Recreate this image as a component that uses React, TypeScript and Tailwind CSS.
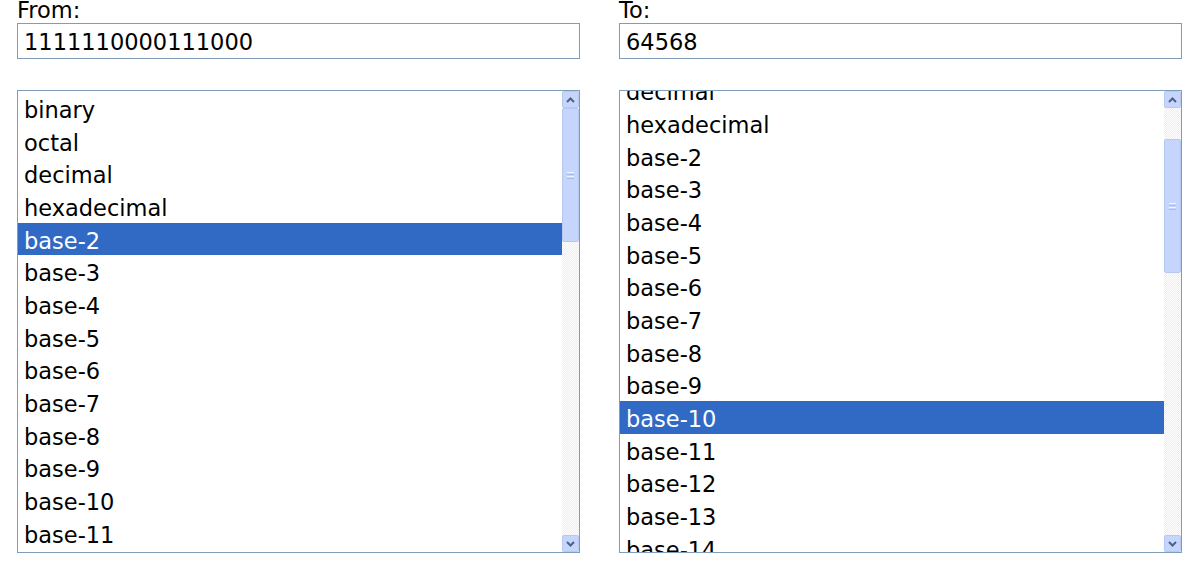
import React from "react";

const options = [
  "binary",
  "octal",
  "decimal",
  "hexadecimal",
  ...Array.from({ length: 35 }, (_, i) => `base-${i + 2}`),
];

function Chevron({ up }: { up: boolean }) {
  return (
    <svg width="9" height="6" viewBox="0 0 9 6" className="block">
      <path
        d={up ? "M1 5 L4.5 1.5 L8 5" : "M1 1 L4.5 4.5 L8 1"}
        fill="none"
        stroke="#4d6185"
        strokeWidth={2}
      />
    </svg>
  );
}

function ScrollButton({ up }: { up: boolean }) {
  return (
    <div className="h-[17px] w-[17px] shrink-0 rounded-[2px] border border-[#b7c9f3] bg-[#c6d5fb] flex items-center justify-center">
      <Chevron up={up} />
    </div>
  );
}

function Scrollbar({ thumbTop }: { thumbTop: number }) {
  return (
    <div className="w-[17px] shrink-0 flex flex-col bg-[repeating-conic-gradient(#ffffff_0_25%,#eeede6_0_50%)] bg-[length:2px_2px]">
      <ScrollButton up />
      <div className="relative flex-1">
        <div
          className="absolute left-0 h-[134px] w-[17px] rounded-[2px] border border-[#b6c8f2] bg-[#c6d5fc] flex flex-col items-center justify-center gap-[1px]"
          style={{ top: thumbTop }}
        >
          <div className="h-[1px] w-[7px] bg-[#eef3ff]" />
          <div className="h-[1px] w-[7px] bg-[#a9bdeb]" />
          <div className="h-[1px] w-[7px] bg-[#eef3ff]" />
          <div className="h-[1px] w-[7px] bg-[#a9bdeb]" />
        </div>
      </div>
      <ScrollButton up={false} />
    </div>
  );
}

function ListBox({
  selected,
  offset,
  thumbTop,
}: {
  selected: string;
  offset: number;
  thumbTop: number;
}) {
  return (
    <div className="mt-[31px] h-[463px] border border-[#7f9db9] bg-white flex overflow-hidden">
      <div className="flex-1 overflow-hidden pt-[1px]">
        <div style={{ marginTop: -offset }}>
          {options.map((o) => (
            <div
              key={o}
              className={
                "h-[32.67px] pl-[6px] pt-[4px] leading-[28.67px] whitespace-nowrap " +
                (o === selected ? "bg-[#316ac5] text-white" : "text-black")
              }
            >
              {o}
            </div>
          ))}
        </div>
      </div>
      <Scrollbar thumbTop={thumbTop} />
    </div>
  );
}

function Column({
  label,
  value,
  selected,
  offset,
  thumbTop,
}: {
  label: string;
  value: string;
  selected: string;
  offset: number;
  thumbTop: number;
}) {
  return (
    <div className="w-[563px] shrink-0">
      <div className="h-[23px] leading-[23px] -mt-[1px] mb-[1px] text-black">{label}</div>
      <div className="h-[36px] border border-[#7f9db9] bg-white pl-[6px] pt-[3px] leading-[31px] text-black">
        {value}
      </div>
      <ListBox selected={selected} offset={offset} thumbTop={thumbTop} />
    </div>
  );
}

export default function App() {
  return (
    <div className="w-[1194px] h-[562px] bg-white overflow-hidden font-['DejaVu_Sans','Verdana',sans-serif] text-[22.5px]">
      <div className="flex gap-[39px] pl-[17px]">
        <Column
          label="From:"
          value="1111110000111000"
          selected="base-2"
          offset={0}
          thumbTop={0}
        />
        <Column
          label="To:"
          value="64568"
          selected="base-10"
          offset={83}
          thumbTop={31}
        />
      </div>
    </div>
  );
}
